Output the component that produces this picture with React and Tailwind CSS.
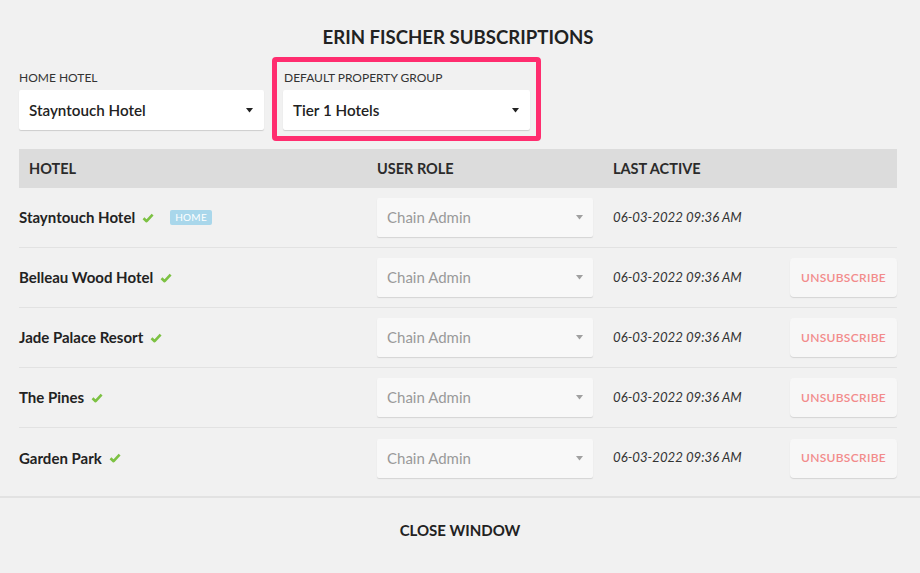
const hotels = [
  { name: 'Stayntouch Hotel', home: true },
  { name: 'Belleau Wood Hotel' },
  { name: 'Jade Palace Resort' },
  { name: 'The Pines' },
  { name: 'Garden Park' },
]

function Check() {
  return (
    <svg className="w-[12px] h-[10px] ml-[7px]" viewBox="0 0 12 10" fill="none">
      <path d="M1.5 5.2 L4.6 8.2 L10.6 1.6" stroke="#7cc142" strokeWidth="2.6" strokeLinejoin="round" />
    </svg>
  )
}

function Caret({ color = '#222' }) {
  return (
    <svg className="w-[7px] h-[5px]" viewBox="0 0 7 5">
      <path d="M0 0 H7 L3.5 4.5 Z" fill={color} />
    </svg>
  )
}

function WhiteSelect({ value }) {
  return (
    <div className="h-[40px] bg-white rounded-[2px] shadow-[0_1px_1px_rgba(0,0,0,0.15)] flex items-center justify-between pl-[10px] pr-[11px]">
      <span className="text-[15.2px] font-semibold text-[#222]">{value}</span>
      <Caret />
    </div>
  )
}

export default function App() {
  return (
    <div className="w-[920px] h-[573px] bg-[#f1f1f1] text-[#2b2b2b] flex flex-col overflow-hidden" style={{ fontFamily: 'Lato, "Open Sans", sans-serif' }}>
      <div className="px-[19px] pr-[23px] flex-1">
        {/* Title */}
        <h1 className="pt-[24px] h-[50px] leading-[26px] text-center text-[18.6px] font-bold text-[#222] mb-[7px]">
          ERIN FISCHER SUBSCRIPTIONS
        </h1>

        {/* Filters */}
        <div className="flex gap-[8px]">
          <div className="w-[245px] pt-[13px]">
            <div className="text-[12px] leading-[16px] text-[#333]">HOME HOTEL</div>
            <div className="mt-[4px]">
              <WhiteSelect value="Stayntouch Hotel" />
            </div>
          </div>
          <div className="w-[269px] border-[5px] border-[#ff2d6f] rounded-[4px] px-[6px] pt-[8px] pb-[6px]">
            <div className="text-[12px] leading-[16px] text-[#333] pl-[1px]">DEFAULT PROPERTY GROUP</div>
            <div className="mt-[4px]">
              <WhiteSelect value="Tier 1 Hotels" />
            </div>
          </div>
        </div>

        {/* Table header */}
        <div className="mt-[8px] h-[39px] bg-[#dcdcdc] grid grid-cols-[358px_236px_177px_1fr] items-center text-[14.5px] font-bold text-[#2b2b2b]">
          <div className="pl-[10px]">HOTEL</div>
          <div>USER ROLE</div>
          <div>LAST ACTIVE</div>
          <div />
        </div>

        {/* Rows */}
        {hotels.map((h, i) => (
          <div
            key={h.name}
            className={`h-[60px] grid grid-cols-[358px_236px_177px_1fr] items-center ${i < hotels.length - 1 ? 'border-b border-[#e2e2e2]' : ''}`}
          >
            <div className="flex items-center">
              <span className="text-[15px] font-bold text-[#222]">{h.name}</span>
              <Check />
              {h.home && (
                <span className="ml-[16px] h-[15px] px-[5px] rounded-[2px] bg-[#a9d7eb] text-white text-[10px] leading-[15px] tracking-[0.3px]">
                  HOME
                </span>
              )}
            </div>
            <div className="w-[216px] h-[39px] bg-[#f8f8f8] rounded-[2px] shadow-[0_1px_1px_rgba(0,0,0,0.12)] flex items-center justify-between pl-[10px] pr-[10px]">
              <span className="text-[15px] text-[#9a9a9a]">Chain Admin</span>
              <Caret color="#a0a0a0" />
            </div>
            <div className="text-[13.2px] italic text-[#333]">06-03-2022 09:36 AM</div>
            <div className="flex justify-end">
              {!h.home && (
                <button className="w-[107px] h-[39px] bg-[#f7f7f7] rounded-[4px] shadow-[0_1px_1px_rgba(0,0,0,0.12)] text-[12px] font-semibold tracking-[0.3px] text-[#f28b8b]">
                  UNSUBSCRIBE
                </button>
              )}
            </div>
          </div>
        ))}
      </div>

      {/* Footer */}
      <div className="h-[77px] border-t-2 border-[#e2e2e2] flex items-center justify-center pb-[10px]">
        <span className="text-[15px] font-bold text-[#222]">CLOSE WINDOW</span>
      </div>
    </div>
  )
}
